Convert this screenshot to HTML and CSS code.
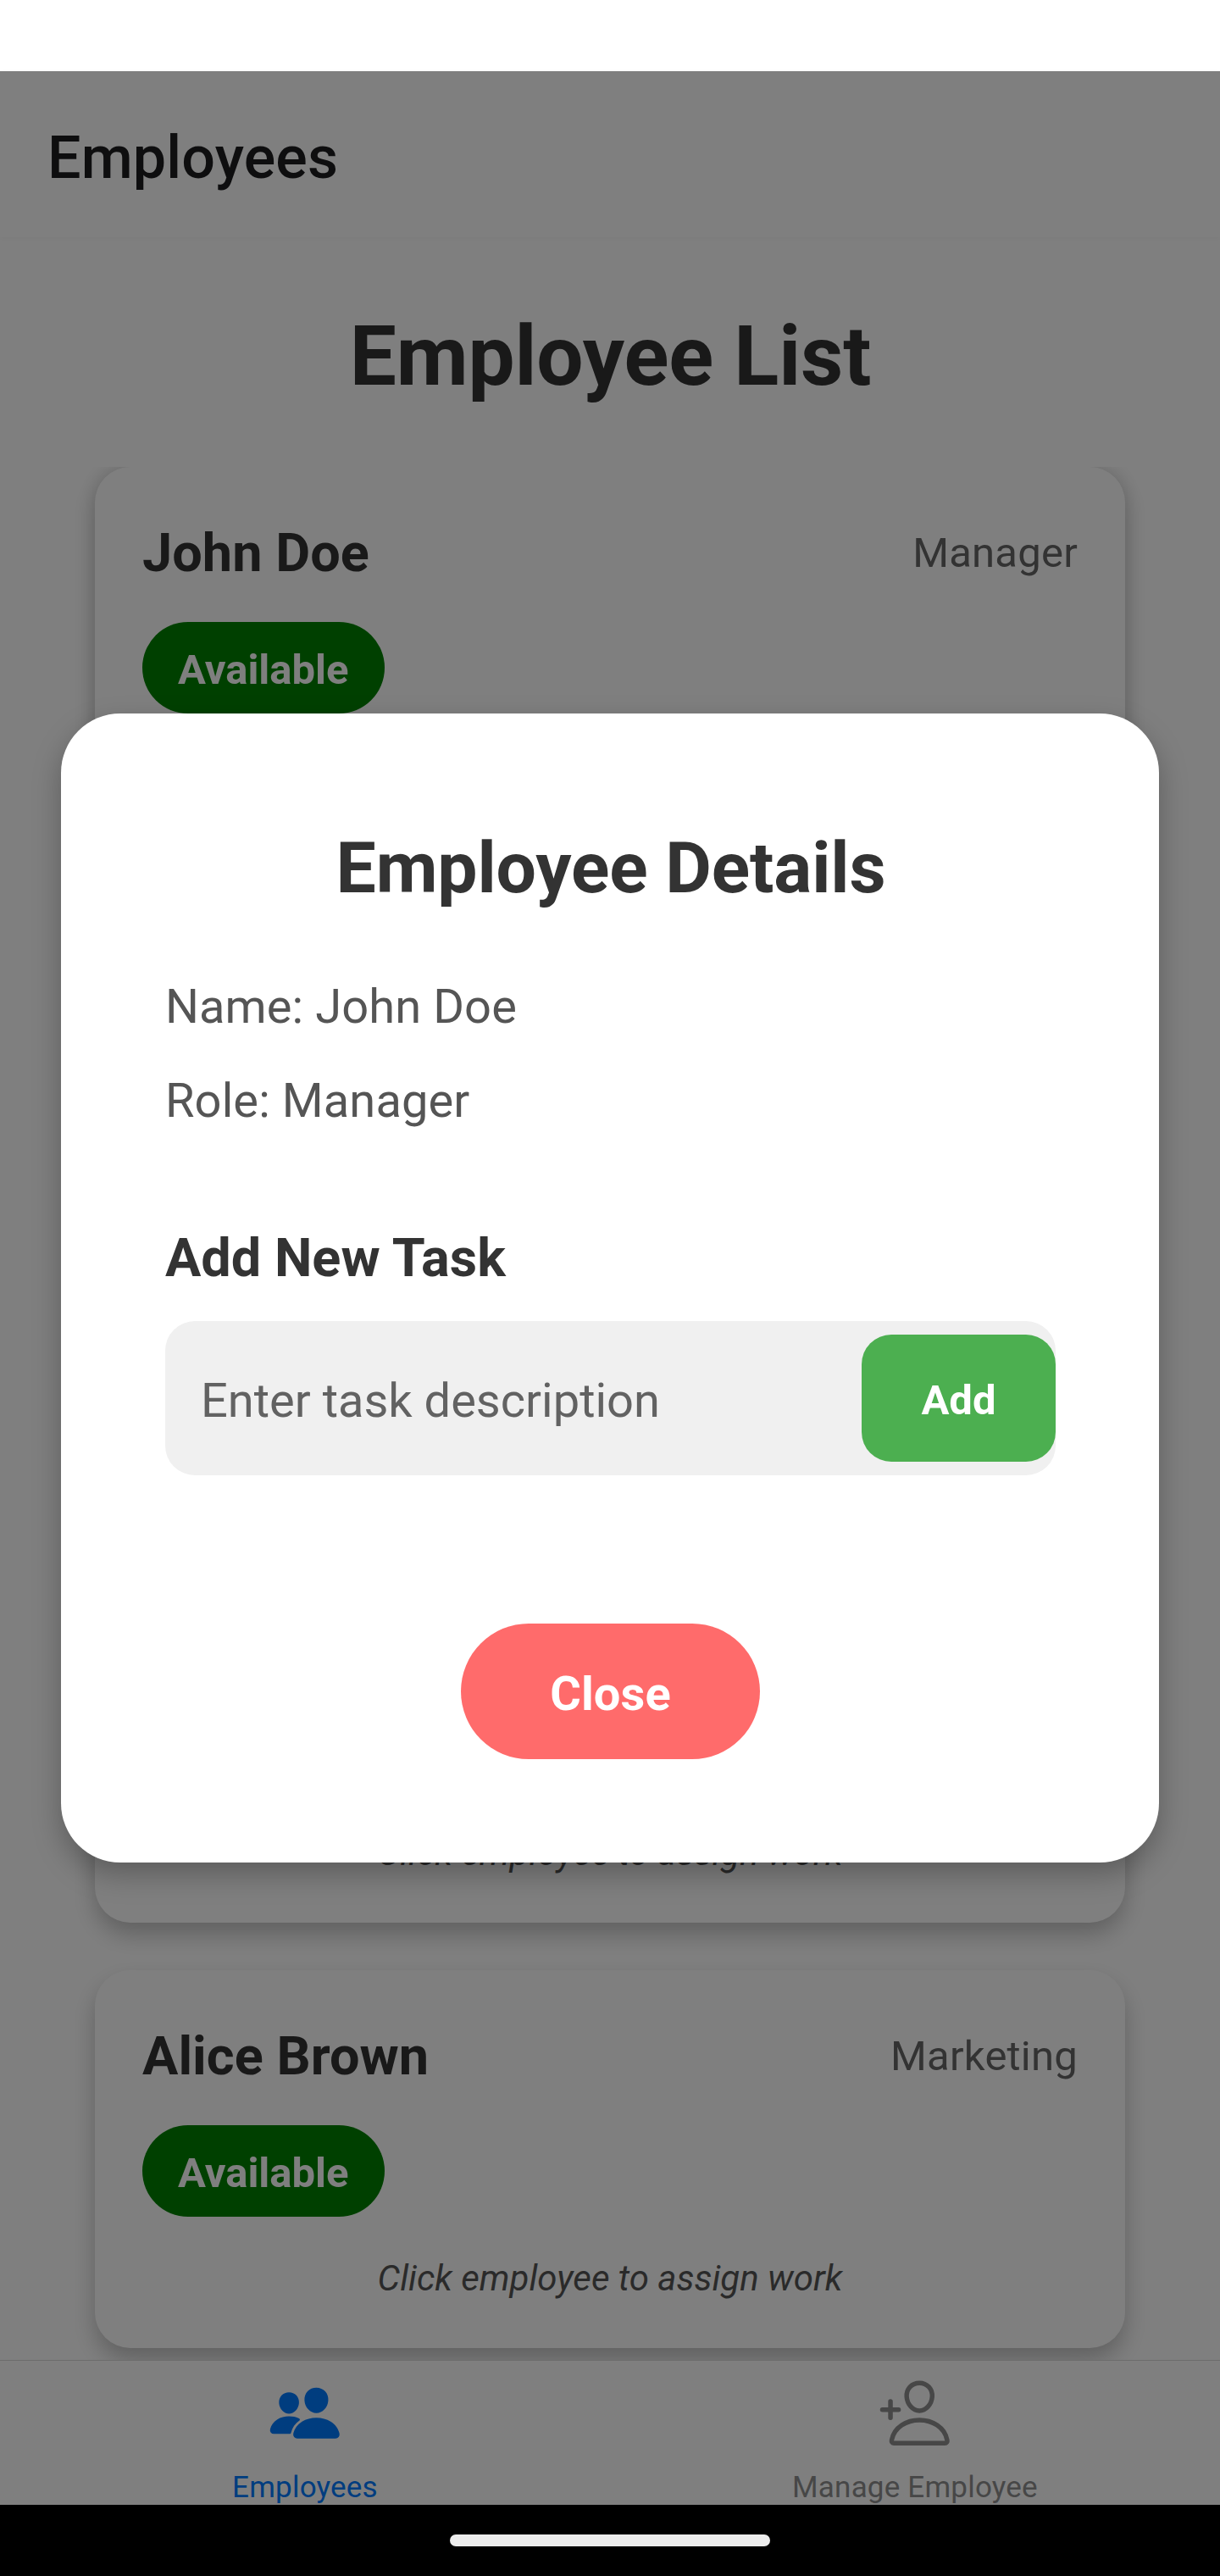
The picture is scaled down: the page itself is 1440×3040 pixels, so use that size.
FILE: index.html
```html
<!DOCTYPE html>
<html lang="en">
<head>
<meta charset="utf-8">
<title>Employees</title>
<link rel="stylesheet" href="styles.css">
</head>
<body>
<div class="phone">
  <div class="status-bar"></div>
  <div class="app">
    <header class="header"><h1 class="header-title">Employees</h1></header>
    <main class="screen">
      <h2 class="screen-title">Employee List</h2>
      <div class="list">
        <article class="card card-open">
          <div class="card-row"><span class="name">John Doe</span><span class="role">Manager</span></div>
          <span class="badge">Available</span>
        </article>
        <article class="card card-last-row">
          <p class="hint">Click employee to assign work</p>
        </article>
        <article class="card">
          <div class="card-row"><span class="name">Alice Brown</span><span class="role">Marketing</span></div>
          <span class="badge">Available</span>
          <p class="hint">Click employee to assign work</p>
        </article>
      </div>
    </main>
    <nav class="tabs">
      <a class="tab tab-active">
        <svg class="tab-icon" viewBox="0 0 512 512" fill="currentColor"><path d="M336 256c-20.56 0-40.44-9.18-56-25.84-15.13-16.25-24.37-37.92-26-61-1.74-24.62 5.77-47.26 21.14-63.76S312 80 336 80c23.83 0 45.38 9.06 60.7 25.52 15.47 16.62 23 39.22 21.26 63.63-1.67 23.11-10.9 44.77-26 61C376.44 246.82 356.57 256 336 256zM467.83 432H204.18a27.71 27.71 0 01-22-10.67 30.22 30.22 0 01-5.26-25.79c8.42-33.81 29.28-61.85 60.32-81.08C264.79 297.4 299.86 288 336 288c36.85 0 71 9 98.71 26.05 31.11 19.13 52 47.33 60.38 81.55a30.27 30.27 0 01-5.32 25.78A27.68 27.68 0 01467.83 432zM147 260c-35.19 0-66.13-32.72-69-72.93-1.42-20.6 5-39.65 18-53.62 12.86-13.83 31-21.45 51-21.45s38 7.66 50.93 21.57c13.1 14.08 19.5 33.09 18 53.52-2.87 40.2-33.8 72.91-68.93 72.91zM212.66 291.45c-17.59-8.6-40.42-12.9-65.65-12.9-29.46 0-58.07 7.68-80.57 21.62-25.51 15.83-42.67 38.88-49.6 66.71a27.39 27.39 0 004.79 23.36A25.32 25.32 0 0041.72 400h111a8 8 0 007.87-6.57c.11-.63.25-1.26.41-1.88 8.48-34.06 28.35-62.84 57.71-83.82a8 8 0 00-.63-13.39c-1.57-.92-3.37-1.89-5.42-2.89z"/></svg>
        <span>Employees</span>
      </a>
      <a class="tab">
        <svg class="tab-icon" viewBox="0 0 512 512" fill="none" stroke="currentColor" stroke-width="32" stroke-linecap="round" stroke-linejoin="round"><path d="M376 144c-3.92 52.87-44 96-88 96s-84.15-43.12-88-96c-4-55 35-96 88-96s92 42 88 96z"/><path d="M288 304c-87 0-175.3 48-191.64 138.6-2 10.92 4.21 21.4 15.65 21.4H464c11.44 0 17.62-10.48 15.65-21.4C463.3 352 375 304 288 304z"/><path d="M88 176v112M144 232H32"/></svg>
        <span>Manage Employee</span>
      </a>
    </nav>
    <div class="overlay">
      <section class="modal">
        <h2 class="modal-title">Employee Details</h2>
        <p class="detail">Name: John Doe</p>
        <p class="detail">Role: Manager</p>
        <h3 class="task-title">Add New Task</h3>
        <div class="task-input">
          <span class="placeholder">Enter task description</span>
          <button class="add">Add</button>
        </div>
        <button class="close">Close</button>
      </section>
    </div>
  </div>
  <div class="system-nav"><div class="home-pill"></div></div>
</div>
</body>
</html>
```
FILE: styles.css
```css
* { box-sizing: border-box; }
body { margin: 0; background: #fff; font-family: Roboto, sans-serif; }
h1, h2, h3, p { margin: 0; }
button { border: 0; font-family: inherit; color: #fff; font-weight: 700; }

.phone { width: 1440px; height: 3040px; display: flex; flex-direction: column; overflow: hidden; }
.status-bar { height: 84px; flex: none; background: #fff; }
.app { position: relative; flex: 1; min-height: 0; display: flex; flex-direction: column; background: #fff; }

.header { flex: none; height: 196px; padding: 8px 56px 0; display: flex; align-items: center; background: #fff; box-shadow: 0 2px 6px rgba(0, 0, 0, .03); position: relative; }
.header-title { font-size: 70px; font-weight: 500; letter-spacing: .15px; color: #1c1c1e; }

.screen { flex: 1; min-height: 0; display: flex; flex-direction: column; padding-top: 84px; }
.screen-title { flex: none; font-size: 98px; line-height: 114px; letter-spacing: -.1px; padding-left: 1px; text-align: center; color: #333; }
.list { flex: 1; min-height: 0; margin-top: 73px; padding: 0 112px; display: flex; flex-direction: column; gap: 56px; overflow: hidden; }

.card { flex: none; padding: 56px; background: #fff; border-radius: 42px; box-shadow: 0 14px 28px -1px rgba(0, 0, 0, .25); }
.card-open { height: 1216px; box-shadow: 0 14px 28px -1px rgba(0, 0, 0, .16), 0 0 24px rgba(0, 0, 0, .16); }
.card-last-row { height: 446px; display: flex; flex-direction: column; justify-content: flex-end; }
.card-row { display: flex; justify-content: space-between; line-height: 91px; margin-bottom: 36px; }
.name { font-size: 63px; font-weight: 700; letter-spacing: .05px; color: #333; }
.role { font-size: 49px; letter-spacing: .22px; color: #666; }
.badge { display: block; width: max-content; padding: 5px 42px 0; border-radius: 54px; background: green; color: #fff; font-size: 49px; font-weight: 700; line-height: 103px; }
.hint { margin-top: 47px; font-size: 42px; line-height: 52px; font-style: italic; text-align: center; color: #555; }

.tabs { flex: none; height: 171px; display: flex; background: #fff; border-top: 1px solid #d8d8d8; }
.tab { flex: 1; display: flex; flex-direction: column; align-items: center; padding-top: 18px; gap: 23px; font-size: 35px; line-height: 41px; letter-spacing: .2px; color: #8e8e8f; }
.tab-active { color: #007aff; }
.tab-icon { flex: none; width: 87.5px; height: 87.5px; }

.overlay { position: absolute; inset: 0; display: flex; align-items: center; justify-content: center; background: rgba(0, 0, 0, .5); }
.modal { width: 1296px; height: 1356px; padding: 133px 122px 122px 123px; border-radius: 70px; background: #fff; box-shadow: 0 14px 34px rgba(0, 0, 0, .27); display: flex; flex-direction: column; }
.modal-title { font-size: 84px; line-height: 100px; letter-spacing: -.1px; padding-left: 1px; text-align: center; color: #333; margin-bottom: 80px; }
.detail { font-size: 56px; line-height: 66px; letter-spacing: .1px; color: #555; }
.detail + .detail { margin-top: 45px; }
.task-title { margin: 116px 0 37px; font-size: 63px; line-height: 74px; color: #333; }
.task-input { height: 182px; display: flex; align-items: center; justify-content: space-between; padding-left: 42px; border-radius: 35px; background: #f0f0f0; }
.placeholder { padding-top: 6px; font-size: 56px; color: #626262; }
.add { width: 229px; height: 150px; padding: 5px 0 0; border-radius: 35px; background: #4caf50; font-size: 49px; }
.close { align-self: center; width: 353px; height: 160px; margin-top: 175px; padding: 6px 0 0; border-radius: 80px; background: #ff6b6b; font-size: 56px; letter-spacing: .1px; }

.system-nav { flex: none; height: 84px; display: flex; align-items: center; justify-content: center; background: #000; }
.home-pill { width: 378px; height: 14px; border-radius: 7px; background: #ececec; }
```
